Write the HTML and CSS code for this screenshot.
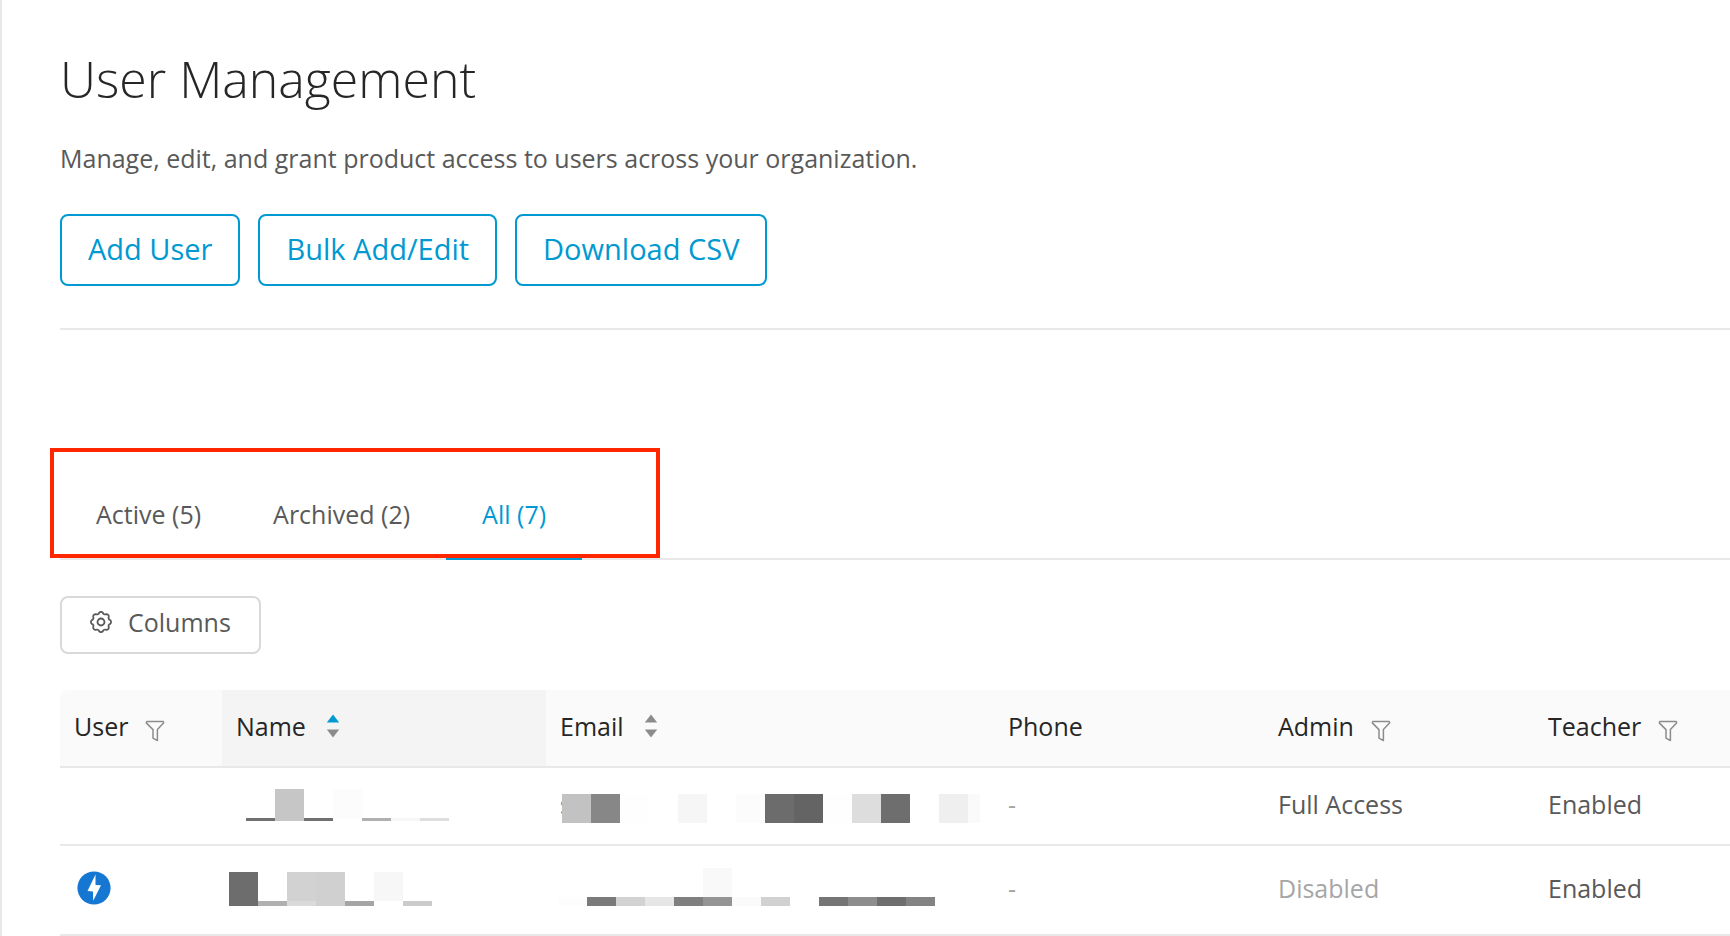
FILE: index.html
```html
<!DOCTYPE html>
<html lang="en">
  <head>
    <meta charset="UTF-8" />
    <meta name="viewport" content="width=device-width, initial-scale=1.0" />
    <title>User Management</title>
    <link rel="stylesheet" href="styles.css">
  </head>
  <body>
    <!-- shared icons -->
    <svg class="sprite" aria-hidden="true">
      <symbol id="icon-filter" viewBox="0 0 20 22">
        <path d="M1.8 1.5h16.4q.8.7.3 1.6L12.4 9.6v11L8 18.2V9.6L1.5 3.1q-.5-.9.3-1.6z" fill="none" stroke="currentColor" stroke-width="1.5" stroke-linejoin="round" />
      </symbol>
      <symbol id="icon-sort" viewBox="0 0 14 24">
        <path class="sort-up" d="M7 .5L13.2 8.5H.8z" />
        <path class="sort-down" d="M7 23.5L.8 15.5h12.4z" />
      </symbol>
    </svg>

    <main class="page">
      <h1 class="title">User Management</h1>
      <p class="subtitle">Manage, edit, and grant product access to users across your organization.</p>

      <div class="actions">
        <button type="button" class="btn">Add User</button>
        <button type="button" class="btn">Bulk Add/Edit</button>
        <button type="button" class="btn">Download CSV</button>
      </div>

      <nav class="tabs">
        <a href="#active" class="tab">Active (5)</a>
        <a href="#archived" class="tab">Archived (2)</a>
        <a href="#all" class="tab tab-active">All (7)</a>
        <span class="highlight"></span>
      </nav>

      <button type="button" class="columns-btn">
        <svg width="22" height="22" viewBox="-11 -11 22 22" fill="none" stroke="currentColor" stroke-width="1.8" aria-hidden="true">
          <path d="M9.1-1.93A2.4 2.4 0 0 1 9.1 1.93A2.2 2.2 0 0 0 7.8 5.07A2.4 2.4 0 0 1 5.07 7.8A2.2 2.2 0 0 0 1.93 9.1A2.4 2.4 0 0 1-1.93 9.1A2.2 2.2 0 0 0-5.07 7.8A2.4 2.4 0 0 1-7.8 5.07A2.2 2.2 0 0 0-9.1 1.93A2.4 2.4 0 0 1-9.1-1.93A2.2 2.2 0 0 0-7.8-5.07A2.4 2.4 0 0 1-5.07-7.8A2.2 2.2 0 0 0-1.93-9.1A2.4 2.4 0 0 1 1.93-9.1A2.2 2.2 0 0 0 5.07-7.8A2.4 2.4 0 0 1 7.8-5.07A2.2 2.2 0 0 0 9.1-1.93z" />
          <circle r="3.5" />
        </svg>
        Columns
      </button>

      <table class="users">
        <colgroup>
          <col class="col-user">
          <col class="col-name">
          <col class="col-email">
          <col class="col-access">
          <col class="col-access">
          <col>
        </colgroup>
        <thead>
          <tr>
            <th scope="col">
              <div class="head">User
                <button type="button" class="filter" aria-label="Filter"><svg width="20" height="22"><use href="#icon-filter" /></svg></button>
              </div>
            </th>
            <th scope="col" class="sorted">
              <div class="head">Name
                <button type="button" class="sort sort-asc" aria-label="Sort"><svg width="14" height="24"><use href="#icon-sort" /></svg></button>
              </div>
            </th>
            <th scope="col">
              <div class="head">Email
                <button type="button" class="sort" aria-label="Sort"><svg width="14" height="24"><use href="#icon-sort" /></svg></button>
              </div>
            </th>
            <th scope="col">Phone</th>
            <th scope="col">
              <div class="head">Admin
                <button type="button" class="filter" aria-label="Filter"><svg width="20" height="22"><use href="#icon-filter" /></svg></button>
              </div>
            </th>
            <th scope="col">
              <div class="head">Teacher
                <button type="button" class="filter" aria-label="Filter"><svg width="20" height="22"><use href="#icon-filter" /></svg></button>
              </div>
            </th>
          </tr>
        </thead>
        <tbody>
          <tr>
            <td></td>
            <td>
              <div class="redacted">
                <svg width="324" height="40" shape-rendering="crispEdges" aria-hidden="true">
                  <rect x="24" y="34" width="29" height="3" fill="#707070" />
                  <rect x="53" y="5" width="29" height="32" fill="#c6c6c6" />
                  <rect x="82" y="34" width="29" height="3" fill="#707070" />
                  <rect x="111" y="5" width="29" height="29" fill="#fcfcfc" />
                  <rect x="140" y="34" width="29" height="3" fill="#b0b0b0" />
                  <rect x="169" y="34" width="29" height="3" fill="#f7f7f7" />
                  <rect x="198" y="34" width="29" height="3" fill="#dedede" />
                </svg>
              </div>
            </td>
            <td>
              <div class="redacted">s
                <svg width="448" height="40" shape-rendering="crispEdges" aria-hidden="true">
                  <rect x="16" y="10" width="29" height="29" fill="#c2c2c2" />
                  <rect x="45" y="10" width="29" height="29" fill="#878787" />
                  <rect x="74" y="10" width="29" height="29" fill="#fefefe" />
                  <rect x="132" y="10" width="29" height="29" fill="#f6f6f6" />
                  <rect x="190" y="10" width="29" height="29" fill="#fcfcfc" />
                  <rect x="219" y="10" width="29" height="29" fill="#6c6c6c" />
                  <rect x="248" y="10" width="29" height="29" fill="#646464" />
                  <rect x="277" y="10" width="29" height="29" fill="#fefefe" />
                  <rect x="306" y="10" width="29" height="29" fill="#dddddd" />
                  <rect x="335" y="10" width="29" height="29" fill="#6e6e6e" />
                  <rect x="393" y="10" width="29" height="29" fill="#efefef" />
                  <rect x="422" y="10" width="12" height="29" fill="#fafafa" />
                </svg>
              </div>
            </td>
            <td class="muted">-</td>
            <td>Full Access</td>
            <td>Enabled</td>
          </tr>
          <tr>
            <td>
              <div class="badge">
                <svg width="34" height="34" viewBox="-17 -17 34 34" aria-hidden="true">
                  <circle r="16.6" fill="#1677d2" />
                  <path d="M1.5-13.5L-6.5 3-1 3.4-.8 12.8 7-2.8 1.5-3z" fill="#fff" />
                </svg>
              </div>
            </td>
            <td>
              <div class="redacted">
                <svg width="324" height="40" shape-rendering="crispEdges" aria-hidden="true">
                  <rect x="7" y="4" width="29" height="34" fill="#6d6d6d" />
                  <rect x="36" y="33" width="29" height="5" fill="#b0b0b0" />
                  <rect x="65" y="4" width="29" height="29" fill="#d2d2d2" />
                  <rect x="65" y="33" width="29" height="5" fill="#dadada" />
                  <rect x="94" y="4" width="29" height="34" fill="#d0d0d0" />
                  <rect x="123" y="33" width="29" height="5" fill="#a5a5a5" />
                  <rect x="152" y="4" width="29" height="29" fill="#f7f7f7" />
                  <rect x="181" y="33" width="29" height="5" fill="#cbcbcb" />
                </svg>
              </div>
            </td>
            <td>
              <div class="redacted">
                <svg width="448" height="40" shape-rendering="crispEdges" aria-hidden="true">
                  <rect x="12" y="29" width="29" height="9" fill="#fdfdfd" />
                  <rect x="41" y="29" width="29" height="9" fill="#7a7a7a" />
                  <rect x="70" y="29" width="29" height="9" fill="#d2d2d2" />
                  <rect x="99" y="29" width="29" height="9" fill="#e6e6e6" />
                  <rect x="128" y="29" width="29" height="9" fill="#7f7f7f" />
                  <rect x="157" y="0" width="29" height="29" fill="#f9f9f9" />
                  <rect x="157" y="29" width="29" height="9" fill="#949494" />
                  <rect x="186" y="29" width="29" height="9" fill="#fafafa" />
                  <rect x="215" y="29" width="29" height="9" fill="#d1d1d1" />
                  <rect x="273" y="29" width="29" height="9" fill="#757575" />
                  <rect x="302" y="29" width="29" height="9" fill="#8d8d8d" />
                  <rect x="331" y="29" width="29" height="9" fill="#6e6e6e" />
                  <rect x="360" y="29" width="29" height="9" fill="#838383" />
                </svg>
              </div>
            </td>
            <td class="muted">-</td>
            <td class="muted">Disabled</td>
            <td>Enabled</td>
          </tr>
        </tbody>
      </table>
    </main>
  </body>
</html>
```
FILE: styles.css
```css
* {
  margin: 0;
  padding: 0;
  box-sizing: border-box;
}

body {
  font-family: "Open Sans", "Noto Sans", sans-serif;
  font-size: 25px;
  line-height: 40px;
  color: #595959;
  background: #fff;
}

button {
  font: inherit;
  color: inherit;
  background: none;
  border: none;
  cursor: pointer;
}

svg {
  display: block;
  flex: none;
}

.sprite {
  position: absolute;
  width: 0;
  height: 0;
}

.page {
  min-height: 100vh;
  padding: 47px 0 0 58px;
  border-left: 2px solid #e8e8e8;
}

.title {
  font-size: 50px;
  font-weight: 300;
  line-height: 64px;
  color: #262626;
  margin-bottom: 27px;
}

.subtitle {
  margin-bottom: 36px;
}

.actions {
  display: flex;
  gap: 18px;
  padding-bottom: 42px;
  border-bottom: 2px solid #e8e8e8;
}

.btn {
  padding: 13px 26px 15px;
  font-size: 29px;
  color: #0099d1;
  border: 2px solid #0099d1;
  border-radius: 8px;
}

.tabs {
  position: relative;
  display: flex;
  margin: 140px 0 36px;
  border-bottom: 2px solid #e8e8e8;
}

.tab {
  padding: 24px 36px;
  margin-bottom: -2px;
  border-bottom: 2px solid transparent;
  color: inherit;
  text-decoration: none;
}

.tab-active {
  color: #0099d1;
  border-bottom-color: #0099d1;
}

/* red frame around the tabs */
.highlight {
  position: absolute;
  top: -22px;
  left: -10px;
  bottom: 0;
  width: 610px;
  border: 4px solid #ff2600;
  pointer-events: none;
}

.columns-btn {
  display: flex;
  align-items: center;
  gap: 16px;
  padding: 4px 28px 10px;
  margin-bottom: 36px;
  border: 2px solid #d9d9d9;
  border-radius: 8px;
}

.users {
  width: 100%;
  table-layout: fixed;
  border-collapse: separate;
  border-spacing: 0;
}

.col-user {
  width: 162px;
}

.col-name {
  width: 324px;
}

.col-email {
  width: 448px;
}

.col-access {
  width: 270px;
}

.users th,
.users td {
  padding: 16px 14px 20px;
  text-align: left;
  vertical-align: middle;
  white-space: nowrap;
  border-bottom: 2px solid #e8e8e8;
}

.users th {
  font-weight: 400;
  color: #262626;
  background: #fafafa;
}

.users th:first-child {
  border-top-left-radius: 8px;
}

.users th.sorted {
  background: #f4f4f4;
}

.head {
  display: flex;
  align-items: center;
}

.filter {
  margin-left: 17px;
  padding-top: 9px;
  color: #8c8c8c;
}

.sort {
  margin-left: 20px;
  fill: #8c8c8c;
}

.sort-asc {
  --sort-up: #0099d1;
}

.sort-up {
  fill: var(--sort-up, #8c8c8c);
}

.users td.muted {
  color: #a6a6a6;
}

.badge {
  display: flex;
  align-items: center;
  height: 52px;
  padding-left: 3px;
}

.redacted {
  position: relative;
  height: 40px;
}

/* mosaic covers the cell text, edge to edge */
.redacted svg {
  position: absolute;
  top: 0;
  left: -14px;
}
```
